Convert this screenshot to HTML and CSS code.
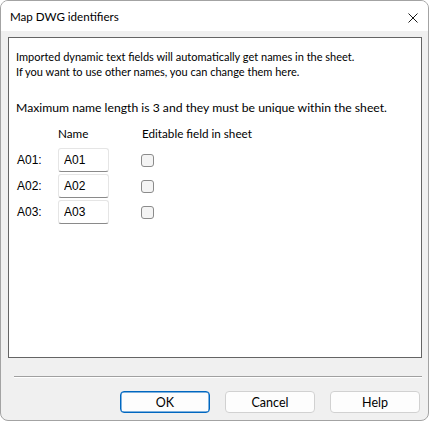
FILE: index.html
```html
<!DOCTYPE html>
<html lang="en">
<head>
  <meta charset="UTF-8" />
  <title>Map DWG identifiers</title>
  <link rel="stylesheet" href="styles.css">
</head>
<body>
  <div class="window">
    <!-- ===== title bar ===== -->
    <div class="titlebar">
      <span class="title">Map DWG identifiers</span>
      <button class="close" aria-label="Close">
        <svg width="10" height="10" viewBox="0 0 10 10">
          <path d="M0.5 0.5 L9.5 9.5 M9.5 0.5 L0.5 9.5" stroke="#1a1a1a" stroke-width="1" fill="none" />
        </svg>
      </button>
    </div>

    <!-- ===== dialog body ===== -->
    <div class="dialog-body">
      <div class="panel">
        <p class="intro">Imported dynamic text fields will automatically get names in the sheet.<br>If you want to use other names, you can change them here.</p>
        <p class="limit">Maximum name length is 3 and they must be unique within the sheet.</p>

        <div class="id-grid">
          <span></span>
          <span class="col-head">Name</span>
          <span class="col-head">Editable field in sheet</span>

          <label class="id-label">A01:</label>
          <input class="id-input" type="text" value="A01">
          <span class="check"></span>

          <label class="id-label">A02:</label>
          <input class="id-input" type="text" value="A02">
          <span class="check"></span>

          <label class="id-label">A03:</label>
          <input class="id-input" type="text" value="A03">
          <span class="check"></span>
        </div>
      </div>

      <div class="separator"></div>

      <div class="buttons">
        <button class="btn btn-default">OK</button>
        <button class="btn">Cancel</button>
        <button class="btn">Help</button>
      </div>
    </div>
  </div>
</body>
</html>
```

FILE: styles.css
```css
body {
  margin: 0;
  background-color: #fff;
  font-family: Lato, 'Noto Sans', sans-serif;
  font-size: 12px;
  color: #000;
}

.window {
  width: 429px;
  height: 421px;
  box-sizing: border-box;
  border: 1px solid #a3a3a3;
  border-radius: 8px;
  overflow: hidden;
  display: flex;
  flex-direction: column;
  background-color: #f0f0f0;
}

.titlebar {
  height: 30px;
  background-color: #fff;
  display: flex;
  align-items: center;
  justify-content: space-between;
  padding: 0 10px 0 9px;
  flex-shrink: 0;
}
.title {
  font-size: 11.6px;
}
.close {
  border: none;
  background: none;
  padding: 0;
  width: 10px;
  height: 10px;
  margin-top: 4px;
  display: flex;
}

.dialog-body {
  flex: 1;
  display: flex;
  flex-direction: column;
  padding: 6px 6px 0 7px;
}

.panel {
  height: 321px;
  box-sizing: border-box;
  background-color: #fff;
  border: 1px solid #646464;
  padding: 11px 7px 0;
}

.intro,
.limit {
  margin: 0;
  white-space: nowrap;
}
.intro {
  font-size: 11px;
  line-height: 15px;
}
.limit {
  margin-top: 21px;
  font-size: 12.2px;
  line-height: 16px;
}

.id-grid {
  display: grid;
  grid-template-columns: 42px 83px auto;
  grid-template-rows: 21px 24px 24px 24px;
  row-gap: 2px;
  margin-top: 9px;
  align-items: center;
}
.id-grid .col-head {
  font-size: 11.7px;
  line-height: 16px;
  align-self: start;
  padding-left: 1px;
}
.id-grid .col-head:nth-child(2) {
  padding-left: 0;
}

.id-label {
  font-family: 'Liberation Sans', Arial, sans-serif;
  font-size: 12px;
  padding-left: 1px;
}

.id-input {
  width: 51px;
  height: 24px;
  box-sizing: border-box;
  margin: 0;
  border: 1px solid #e5e5e5;
  border-bottom-color: #8a8a8a;
  border-radius: 3px;
  padding: 0 5px;
  font-family: 'Liberation Sans', Arial, sans-serif;
  font-size: 12px;
  color: #000;
  background-color: #fff;
  outline: none;
}

.check {
  width: 13px;
  height: 13px;
  box-sizing: border-box;
  border: 1px solid #8b8b8b;
  border-radius: 3px;
  background-color: #f4f4f4;
}

.separator {
  margin: 18px 0 0 6px;
  height: 1px;
  background-color: #a0a0a0;
  border-bottom: 1px solid #fff;
}

.buttons {
  display: flex;
  justify-content: flex-end;
  gap: 15px;
  margin-top: 13px;
  padding-right: 2px;
}
.btn {
  width: 90px;
  height: 22px;
  box-sizing: border-box;
  border: 1px solid #d1d1d1;
  border-radius: 4px;
  background-color: #fdfdfd;
  font-family: Lato, 'Noto Sans', sans-serif;
  font-size: 12.5px;
  color: #000;
  padding: 0;
}
.btn-default {
  border: 1px solid #0067c0;
  box-shadow: inset 0 0 0 0.5px #0067c0;
}
```
